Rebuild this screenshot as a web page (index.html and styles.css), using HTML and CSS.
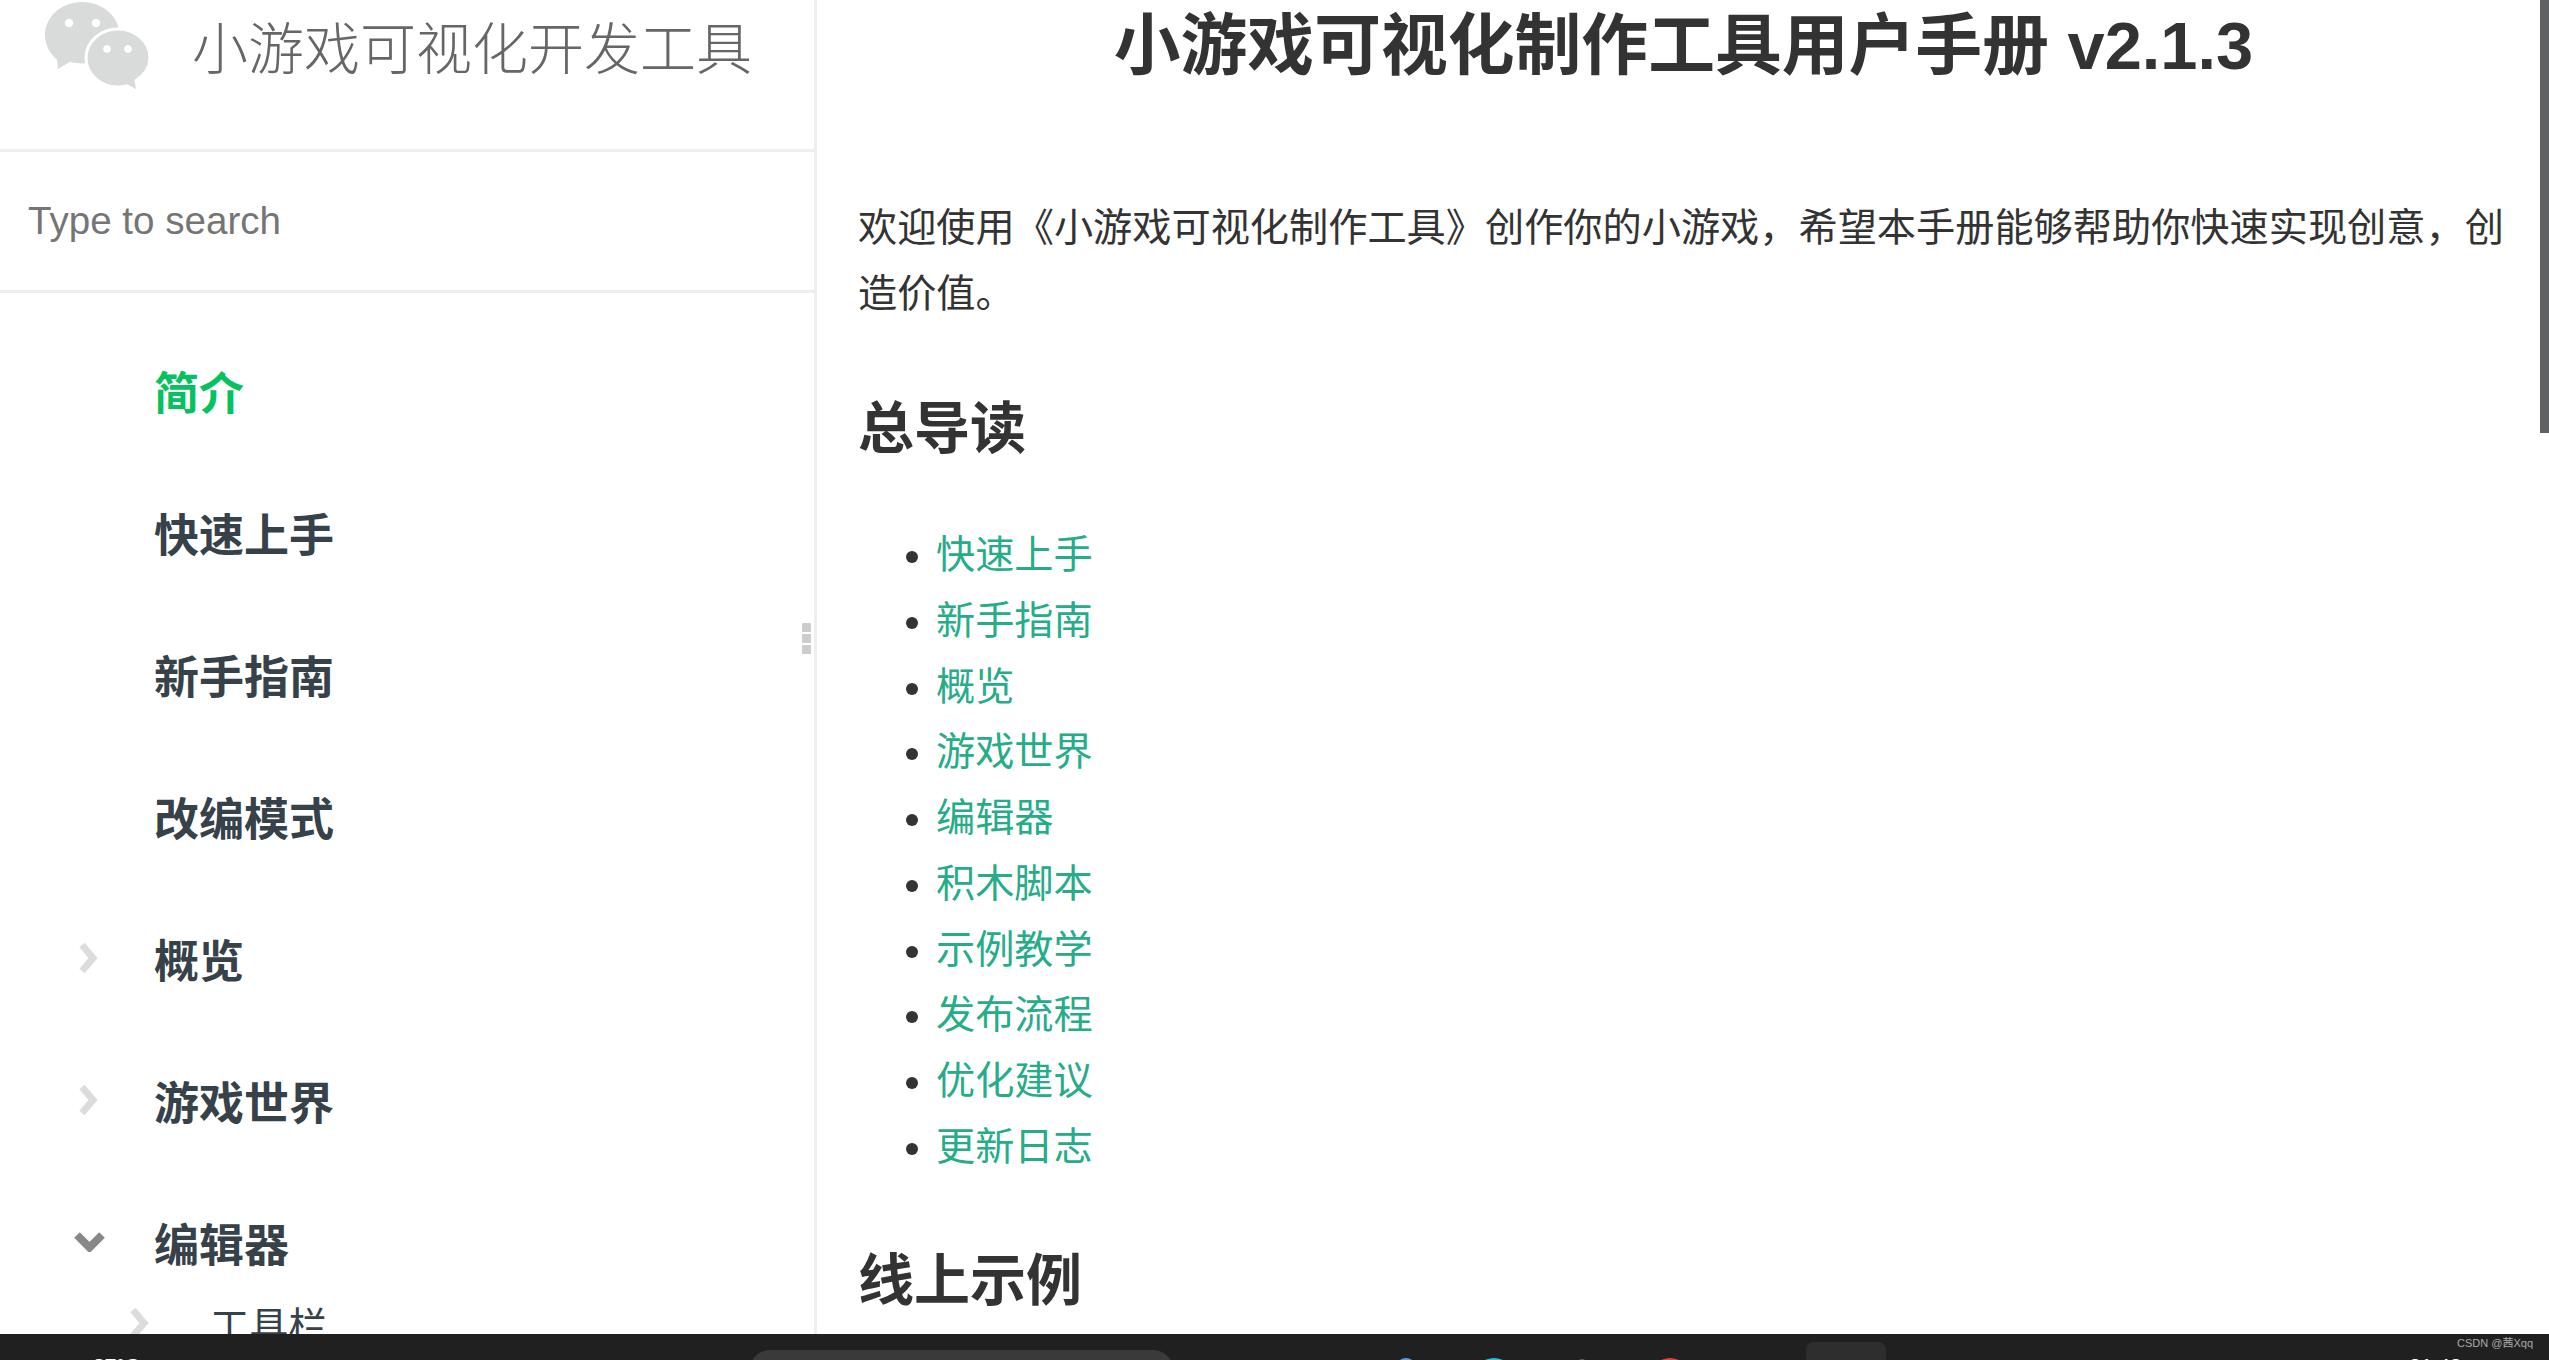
FILE: index.html
```html
<!DOCTYPE html>
<html lang="zh-CN">
<head>
<meta charset="utf-8">
<title>小游戏可视化制作工具用户手册</title>
<link rel="stylesheet" href="styles.css">
</head>
<body>
<div class="window">
  <aside class="sidebar">
    <header class="brand">
      <svg class="logo" viewBox="0 0 105 86" width="105" height="86" aria-hidden="true">
        <path class="logo-bubble" d="M37 0C16.500 0 0 14.800 0 33c0 9.800 4.500 18.500 12 24.600L13 67l12-7.200c4 1.100 8 1.700 12 1.700 20.500 0 37-13 37-31C74 14.800 57.500 0 37 0z"/>
        <path class="logo-bubble logo-front" d="M73 27c-17.500 0-32 12.800-32 29 0 16 14.500 29 32 29 3 0 6-.4 9-1.100L93 90l-2-11.500C99.500 73 105 65 105 56c0-16.200-14.500-29-32-29z"/>
        <circle class="logo-eye" cx="24" cy="21" r="4.200"/><circle class="logo-eye" cx="51" cy="21" r="4.200"/>
        <circle class="logo-eye" cx="62" cy="47" r="3.800"/><circle class="logo-eye" cx="83" cy="47" r="3.800"/>
      </svg>
      <span class="brand-name">小游戏可视化开发工具</span>
    </header>
    <div class="search">Type to search</div>
    <nav class="nav">
      <div class="nav-item active"><span class="caret"></span>简介</div>
      <div class="nav-item"><span class="caret"></span>快速上手</div>
      <div class="nav-item"><span class="caret"></span>新手指南</div>
      <div class="nav-item"><span class="caret"></span>改编模式</div>
      <div class="nav-item"><span class="caret"><svg class="chev" viewBox="0 0 20 30" width="20" height="30"><path d="M4 2l11 13L4 28"/></svg></span>概览</div>
      <div class="nav-item"><span class="caret"><svg class="chev" viewBox="0 0 20 30" width="20" height="30"><path d="M4 2l11 13L4 28"/></svg></span>游戏世界</div>
      <div class="nav-item"><span class="caret"><svg class="chev-open" viewBox="0 0 31 20" width="31" height="20"><path d="M3 3l12.500 12.500L28 3"/></svg></span>编辑器</div>
      <div class="nav-sub"><span class="caret"><svg class="chev" viewBox="0 0 20 30" width="20" height="30"><path d="M4 2l11 13L4 28"/></svg></span>工具栏</div>
    </nav>
    <div class="grip"><i></i><i></i><i></i></div>
  </aside>
  <main class="content">
    <h1>小游戏可视化制作工具用户手册 v2.1.3</h1>
    <p>欢迎使用《小游戏可视化制作工具》创作你的小游戏，希望本手册能够帮助你快速实现创意，创造价值。</p>
    <h2>总导读</h2>
    <ul>
      <li><a href="#">快速上手</a></li>
      <li><a href="#">新手指南</a></li>
      <li><a href="#">概览</a></li>
      <li><a href="#">游戏世界</a></li>
      <li><a href="#">编辑器</a></li>
      <li><a href="#">积木脚本</a></li>
      <li><a href="#">示例教学</a></li>
      <li><a href="#">发布流程</a></li>
      <li><a href="#">优化建议</a></li>
      <li><a href="#">更新日志</a></li>
    </ul>
    <h2>线上示例</h2>
  </main>
  <div class="scrollbar"><div class="thumb"></div></div>
</div>
<footer class="taskbar">
  <div class="tb-left">27°C</div>
  <div class="tb-search"></div>
  <div class="tb-icons">
    <i class="tb-dot blue"></i><i class="tb-dot cyan"></i><i class="tb-dot gray"></i><i class="tb-dot red"></i>
  </div>
  <div class="tb-tile"></div>
  <div class="tb-right">
    <span class="watermark">CSDN @茜Xqq</span>
    <span class="clock">21:43</span>
  </div>
</footer>
</body>
</html>
```
FILE: styles.css
```css
* { box-sizing: border-box; }
html, body { margin: 0; height: 100%; overflow: hidden; background: #fff; }
body { font-family: "Liberation Sans", "Noto Sans CJK SC", sans-serif; color: #333; display: flex; flex-direction: column; height: 1360px; }
.window { height: 1334px; display: flex; overflow: hidden; flex: none; }
.sidebar { width: 817px; flex: none; border-right: 3px solid #eee; position: relative; overflow: hidden; }
.brand { height: 152px; border-bottom: 3px solid #eee; display: flex; align-items: flex-start; padding-left: 45px; }
.logo { flex: none; margin-top: 2px; overflow: visible; }
.logo-bubble { fill: #d9dbda; }
.logo-front { stroke: #fff; stroke-width: 3; }
.logo-eye { fill: #fff; }
.brand-name { margin-left: 42px; margin-top: 18px; font-size: 56px; line-height: 64px; font-weight: 300; color: #666; white-space: nowrap; }
.search { height: 141px; border-bottom: 3px solid #eee; padding-left: 28px; display: flex; align-items: center; font-size: 38.600px; color: #757575; }
.nav { padding-top: 26px; }
.nav-item { height: 142px; display: flex; align-items: center; font-size: 45px; font-weight: 700; color: #364149; }
.nav-item.active { color: #07c160; }
.caret { width: 154px; flex: none; display: flex; justify-content: flex-start; padding-left: 78px; }
.chev { flex: none; }
.chev path { fill: none; stroke: #dcdcdc; stroke-width: 7; }
.chev-open { flex: none; margin-left: -4px; }
.chev-open path { fill: none; stroke: #888; stroke-width: 8; }
.nav-sub { display: flex; align-items: center; font-size: 39.200px; color: #364149; margin-top: -20px; height: 60px; }
.nav-sub .caret { width: 210px; padding-left: 129px; }
.grip { position: absolute; right: 3px; top: 623px; display: flex; flex-direction: column; gap: 2px; }
.grip i { display: block; width: 9px; height: 9px; background: #ccc; border-radius: 1px; }
.content { flex: 1; min-width: 0; padding: 0 31px 0 41px; }
h1 { margin: 0; font-size: 66.800px; line-height: 92px; text-align: center; font-weight: 700; color: #333; }
.content p { margin: 103px 0 0; font-size: 39.200px; line-height: 66px; color: #333; }
h2 { font-size: 56px; line-height: 70px; font-weight: 700; margin: 0; color: #333; }
.content p + h2 { margin-top: 67px; }
ul { margin: 58px 0 0; padding: 0 0 0 78px; font-size: 39.200px; line-height: 65.750px; }
ul + h2 { margin-top: 66px; }
a { color: #26ac88; text-decoration: none; }
.scrollbar { width: 9px; flex: none; background: #fff; }
.thumb { height: 433px; background: #606162; }
.taskbar { height: 26px; flex: none; background: #202020; position: relative; overflow: hidden; display: flex; }
.tb-left { position: absolute; left: 93px; top: 20px; font-size: 21px; line-height: 24px; color: #fff; font-weight: 700; }
.tb-search { position: absolute; left: 750px; top: 16px; width: 423px; height: 40px; border-radius: 20px; background: #3a3a3a; }
.tb-icons { position: absolute; inset: 0; }
.tb-dot { position: absolute; top: 24px; width: 40px; height: 40px; border-radius: 50%; }
.tb-dot.blue { left: 1396px; width: 20px; height: 20px; background: #5b9be6; }
.tb-dot.cyan { left: 1474px; background: #1fc4d8; }
.tb-dot.gray { left: 1577px; top: 25px; width: 10px; height: 10px; background: #666; }
.tb-dot.red { left: 1650px; background: #e2403a; }
.tb-tile { position: absolute; left: 1806px; top: 8px; width: 80px; height: 40px; border-radius: 8px 8px 0 0; background: #2e2e2e; }
.tb-right { position: absolute; inset: 0; }
.watermark { position: absolute; right: 16px; top: 3px; font-size: 11px; line-height: 13px; color: #aaa; }
.clock { position: absolute; left: 2409px; top: 20px; font-size: 21px; line-height: 24px; color: #fff; }
```
